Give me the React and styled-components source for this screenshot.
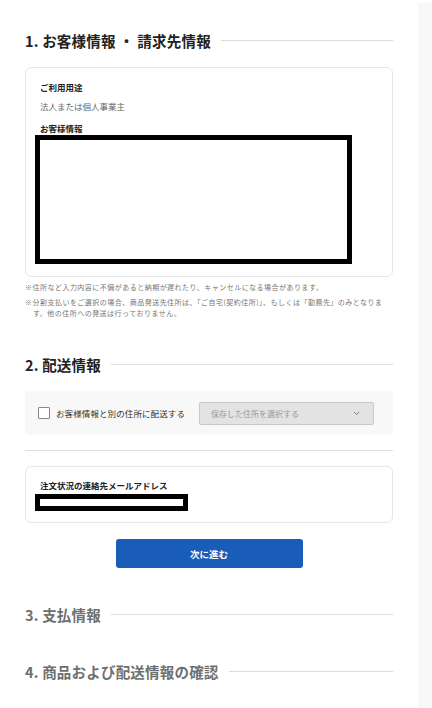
import React from "react"
import styled, { createGlobalStyle } from "styled-components"
import { ChevronDown } from "lucide-react"

const GlobalStyle = createGlobalStyle`
  body {
    margin: 0;
    background: #fff;
    font-family: "Noto Sans CJK JP", "Noto Sans", "Liberation Sans", sans-serif;
    color: #222;
  }
`

const Page = styled.div`
  display: flex;
  width: 432px;
  min-height: 708px;
`

const Main = styled.main`
  flex: 1;
  padding: 0 25px 30px;
`

const Aside = styled.aside`
  width: 14px;
  margin-top: 3px;
  background: #f8f8f8;
`

const Heading = styled.h2`
  display: flex;
  align-items: center;
  gap: 10px;
  height: 20px;
  margin: ${({ $mt }) => $mt}px 0 0;
  font-size: 14.5px;
  font-weight: 700;
  letter-spacing: 0.2px;
  color: ${({ $muted }) => ($muted ? "#6f6f6f" : "#222")};
  white-space: pre;
  &::after {
    content: "";
    flex: 1;
    height: 1px;
    background: #ddd;
  }
`

const Card = styled.div`
  margin-top: ${({ $mt }) => $mt}px;
  border: 1px solid #e6e6e6;
  border-radius: 6px;
  padding: ${({ $pad }) => $pad};
`

const Label = styled.div`
  margin-top: ${({ $mt }) => $mt || 0}px;
  font-size: 8.5px;
  line-height: 12px;
  font-weight: 700;
  color: #222;
`

const Value = styled.div`
  margin-top: 7px;
  font-size: 8.5px;
  line-height: 12px;
  color: #666;
`

const Redacted = styled.div`
  box-sizing: border-box;
  margin: ${({ $mt }) => $mt}px 0 0 -5px;
  width: ${({ $w }) => $w}px;
  height: ${({ $h }) => $h}px;
  border: 5px solid #000;
  background: #fff;
`

const Notes = styled.ul`
  list-style: none;
  margin: 5px 0 0;
  padding: 0;
  display: flex;
  flex-direction: column;
  gap: 4px;
`

const Note = styled.li`
  padding-left: 8px;
  text-indent: -8px;
  font-size: 7px;
  line-height: 11px;
  letter-spacing: 0.48px;
  color: #777;
`

const OptionBox = styled.div`
  display: flex;
  align-items: center;
  height: 44px;
  margin-top: 17px;
  padding: 0 19px 0 13px;
  background: #f8f8f8;
  border-radius: 4px;
`

const CheckLabel = styled.label`
  display: flex;
  align-items: center;
  gap: 6px;
  font-size: 8.5px;
  color: #333;
  letter-spacing: 0.1px;
`

const CheckBox = styled.span`
  box-sizing: border-box;
  width: 12px;
  height: 12px;
  border: 1px solid #888;
  border-radius: 1px;
  background: #fff;
`

const Select = styled.div`
  box-sizing: border-box;
  display: flex;
  align-items: center;
  justify-content: space-between;
  width: 175px;
  height: 23px;
  margin-left: auto;
  padding: 0 12px 0 11px;
  background: #e3e3e3;
  border: 1px solid #c9c9c9;
  border-radius: 2px;
  font-size: 8px;
  color: #999;
`

const Divider = styled.hr`
  margin: 15px 0 0;
  border: 0;
  height: 1px;
  background: #ddd;
`

const Button = styled.button`
  display: block;
  width: 187px;
  height: 29px;
  margin: 16px auto 0;
  border: 0;
  border-radius: 3px;
  background: #195db8;
  color: #fff;
  font-family: inherit;
  font-size: 9.5px;
  font-weight: 700;
`

const App = () => (
  <>
    <GlobalStyle />
    <Page>
      <Main>
        <Heading $mt={30}>1. お客様情報 ・ 請求先情報</Heading>
        <Card $mt={17} $pad="13px 14px 12px">
          <Label>ご利用用途</Label>
          <Value>法人または個人事業主</Value>
          <Label $mt={10}>お客様情報</Label>
          <Redacted $mt={1} $w={317} $h={129} />
        </Card>
        <Notes>
          <Note>※住所など入力内容に不備があると納期が遅れたり、キャンセルになる場合があります。</Note>
          <Note>
            ※分割支払いをご選択の場合、商品発送先住所は、「ご自宅(契約住所)」、もしくは「勤務先」のみとなります。他の住所への発送は行っておりません。
          </Note>
        </Notes>

        <Heading $mt={35}>2. 配送情報</Heading>
        <OptionBox>
          <CheckLabel>
            <CheckBox />
            お客様情報と別の住所に配送する
          </CheckLabel>
          <Select>
            保存した住所を選択する
            <ChevronDown size={9} color="#555" strokeWidth={2} />
          </Select>
        </OptionBox>
        <Divider />
        <Card $mt={15} $pad="12px 14px 11px">
          <Label>注文状況の連絡先メールアドレス</Label>
          <Redacted $mt={3} $w={153} $h={17} />
        </Card>
        <Button>次に進む</Button>

        <Heading $mt={36} $muted>3. 支払情報</Heading>
        <Heading $mt={37} $muted>4. 商品および配送情報の確認</Heading>
      </Main>
      <Aside />
    </Page>
  </>
)

export default App
